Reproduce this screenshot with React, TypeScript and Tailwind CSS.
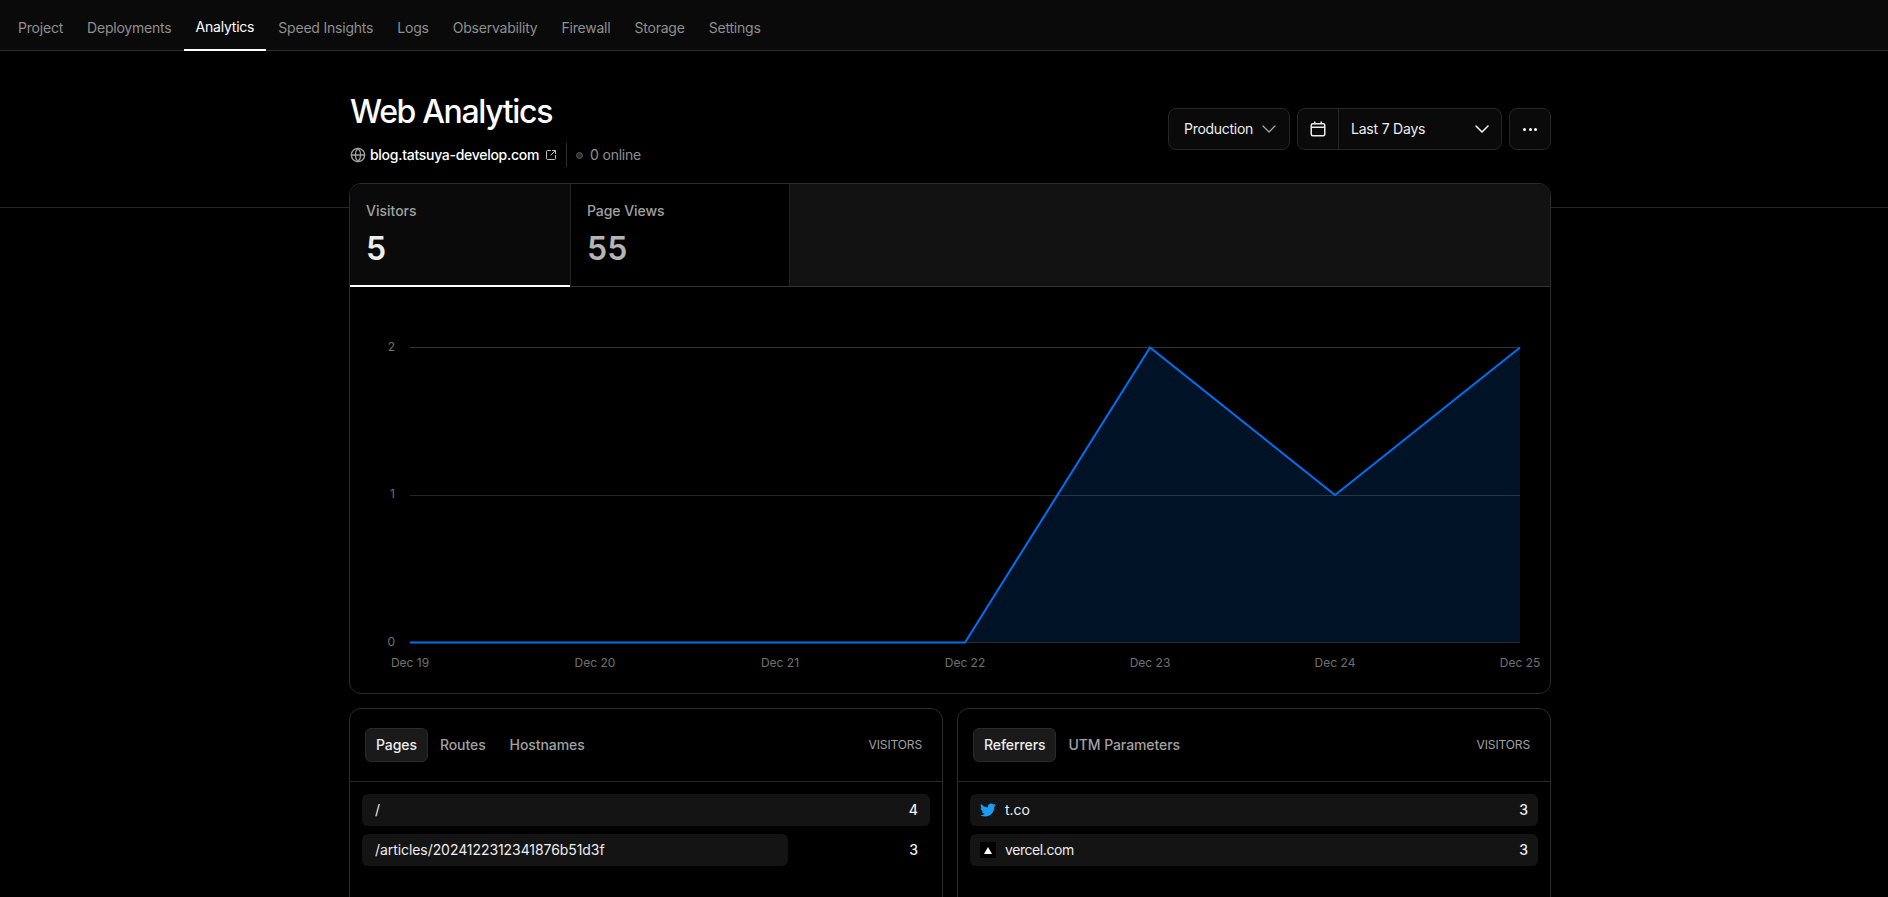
import React from 'react';
import { ChevronDown, Globe, SquareArrowOutUpRight } from 'lucide-react';
import { FaTwitter } from 'react-icons/fa';

const navItems = ['Project', 'Deployments', 'Analytics', 'Speed Insights', 'Logs', 'Observability', 'Firewall', 'Storage', 'Settings'];

const CalendarIcon = () => (
  <svg width="16" height="16" viewBox="0 0 16 16" fill="none" stroke="#ededed" strokeWidth="1.5">
    <rect x="1.25" y="2.75" width="13.5" height="12" rx="1.5" />
    <path d="M1.25 6.25h13.5M4.75 0.5v2.25M11.25 0.5v2.25" />
  </svg>
);

const Chart = () => {
  const xs = [60, 245, 430, 615, 800, 985, 1170];
  const labels = ['Dec 19', 'Dec 20', 'Dec 21', 'Dec 22', 'Dec 23', 'Dec 24', 'Dec 25'];
  return (
    <svg width="1200" height="406" viewBox="0 0 1200 406" className="block">
      <path d="M615 355.5L800 60.5L985 208L1170 60.5V355.5Z" fill="#001226" />
      <path d="M60 60.5H1170" stroke="#333333" strokeWidth="1" />
      <path d="M60 208.5H1170" stroke="#ffffff" strokeOpacity="0.15" strokeWidth="1" />
      <path d="M60 355.5H1170" stroke="#ffffff" strokeOpacity="0.15" strokeWidth="1" />
      <path d="M60 355.5H615L800 60.5L985 208L1170 60.5" fill="none" stroke="#0070f3" strokeWidth="2" />
      {[['2', 60], ['1', 207], ['0', 355]].map(([t, y]) => (
        <text key={t} x="45" y={Number(y) + 4} textAnchor="end" fontSize="12" fill="#707070">{t}</text>
      ))}
      {labels.map((l, i) => (
        <text key={l} x={xs[i]} y="380" textAnchor="middle" fontSize="12" fill="#707070">{l}</text>
      ))}
    </svg>
  );
};

const PanelHeader = ({ tabs }: { tabs: string[] }) => (
  <div className="flex h-[73px] items-center justify-between border-b border-[#262626] pl-[15px] pr-[20px]">
    <div className="flex items-center tracking-[-0.005em]">
      {tabs.map((t, i) =>
        i === 0 ? (
          <div key={t} className="flex h-[34px] items-center rounded-md border border-[#2a2a2a] bg-[#1a1a1a] px-[10px] text-sm font-medium text-[#ededed]">{t}</div>
        ) : (
          <div key={t} className="flex h-[34px] items-center px-[12px] text-sm font-medium text-[#a1a1a1]">{t}</div>
        ),
      )}
    </div>
    <span className="text-xs uppercase tracking-[-0.01em] text-[#a1a1a1]">Visitors</span>
  </div>
);

const Row = ({ label, value, width, icon, tight, pr }: { label: string; value: string; width: string; icon?: React.ReactNode; tight?: boolean; pr: string }) => (
  <div className="relative flex h-8 items-center justify-between text-sm text-[#ededed]">
    <div className={`absolute inset-y-0 left-0 rounded-md bg-[#141414] ${width}`}></div>
    <div className={`relative flex items-center gap-[9px] ${icon ? 'pl-[10px]' : 'pl-[13px]'}`}>
      {icon}
      <span className={tight ? 'tracking-[-0.03em]' : 'tracking-[-0.005em]'}>{label}</span>
    </div>
    <span className={`relative font-medium ${pr}`}>{value}</span>
  </div>
);

export default function App() {
  return (
    <div className="h-[897px] overflow-hidden bg-black font-['Inter',sans-serif] text-[#ededed]">
      {/* Project navigation */}
      <nav className="flex h-[51px] border-b border-[#2e2e2e] bg-[#0a0a0a] pl-[6px]">
        {navItems.map((item) => (
          <div
            key={item}
            className={`flex h-[51px] items-center px-3 pt-[5px] text-sm tracking-[-0.015em] ${item === 'Analytics' ? 'border-b-2 border-white text-white' : 'text-[#8f8f8f]'}`}
          >
            {item}
          </div>
        ))}
      </nav>

      {/* Page title */}
      <div className="h-[157px] border-b border-[#262626] pl-[350px]">
        <div className="flex w-[1201px] justify-between">
          <div className="pt-[41px]">
            <h1 className="text-[32px] leading-10 font-medium tracking-[-0.042em] text-white">Web Analytics</h1>
            <div className="mt-[11px] flex h-6 items-center text-sm">
              <Globe size={16} className="text-[#a1a1a1]" />
              <span className="ml-[4px] font-medium tracking-[-0.02em] text-white">blog.tatsuya-develop.com</span>
              <SquareArrowOutUpRight size={12} className="ml-[6px] text-[#c0c0c0]" />
              <div className="ml-[9px] h-6 w-px bg-[#2e2e2e]"></div>
              <div className="ml-[9px] h-[7px] w-[7px] rounded-full border border-[#555] bg-[#2e2e2e]"></div>
              <span className="ml-[7px] tracking-[-0.015em] text-[#8f8f8f]">0 online</span>
            </div>
          </div>
          <div className="flex gap-[7px] pt-[57px]">
            <div className="flex h-[42px] w-[122px] items-center justify-between rounded-lg border border-[#262626] bg-[#0a0a0a] pl-[15px] pr-[8px] text-sm tracking-[-0.02em]">
              Production
              <ChevronDown size={24} strokeWidth={1.25} className="text-[#a1a1a1]" />
            </div>
            <div className="flex h-[42px] w-[205px] items-center rounded-lg border border-[#262626] bg-[#0a0a0a] text-sm tracking-[-0.015em]">
              <div className="flex h-full w-[41px] items-center justify-center border-r border-[#262626]">
                <CalendarIcon />
              </div>
              <div className="flex flex-1 items-center justify-between pl-[12px] pr-[7px]">
                Last 7 Days
                <ChevronDown size={24} strokeWidth={1.5} className="text-white" />
              </div>
            </div>
            <div className="flex h-[42px] w-[42px] items-center justify-center gap-[2.5px] rounded-lg border border-[#262626] bg-[#0a0a0a]">
              <div className="h-[3px] w-[3px] rounded-full bg-white"></div>
              <div className="h-[3px] w-[3px] rounded-full bg-white"></div>
              <div className="h-[3px] w-[3px] rounded-full bg-white"></div>
            </div>
          </div>
        </div>
      </div>

      <div className="relative -mt-[25px] ml-[349px] w-[1202px]">
        {/* Chart card */}
        <div className="overflow-hidden rounded-xl border border-[#2a2a2a] bg-black">
          <div className="flex h-[103px] border-b border-[#333] bg-[#121212]">
            <div className="-mb-px w-[220px] border-b-2 border-white bg-[#0a0a0a] pl-4 pt-[17px]">
              <div className="text-sm font-medium text-[#a1a1a1]">Visitors</div>
              <div className="mt-[8px] text-[32px] leading-10 font-semibold text-[#ededed]">5</div>
            </div>
            <div className="w-[220px] border-x border-[#222] bg-black pl-4 pt-[17px]">
              <div className="text-sm font-medium tracking-[-0.005em] text-[#a1a1a1]">Page Views</div>
              <div className="mt-[8px] text-[32px] leading-10 font-semibold text-[#b4b4b4]">55</div>
            </div>
          </div>
          <Chart />
        </div>

        {/* Breakdown panels */}
        <div className="mt-[14px] grid grid-cols-2 gap-[14px]">
          <div className="h-[300px] rounded-xl border border-[#2a2a2a]">
            <PanelHeader tabs={['Pages', 'Routes', 'Hostnames']} />
            <div className="space-y-2 px-3 pt-3">
              <Row label="/" value="4" width="w-full" pr="pr-[12px]" />
              <Row label="/articles/2024122312341876b51d3f" value="3" width="w-[75%]" pr="pr-[12px]" />
            </div>
          </div>
          <div className="h-[300px] rounded-xl border border-[#2a2a2a]">
            <PanelHeader tabs={['Referrers', 'UTM Parameters']} />
            <div className="space-y-2 px-3 pt-3">
              <Row label="t.co" value="3" width="w-full" pr="pr-[10px]" icon={<FaTwitter size={16} className="text-[#1d9bf0]" />} />
              <Row
                label="vercel.com"
                value="3"
                width="w-full"
                pr="pr-[10px]"
                tight
                icon={
                  <div className="flex h-4 w-4 items-center justify-center bg-black">
                    <svg width="8" height="7" viewBox="0 0 8 7"><path d="M4 0L8 7H0Z" fill="#fff" /></svg>
                  </div>
                }
              />
            </div>
          </div>
        </div>
      </div>
    </div>
  );
}
